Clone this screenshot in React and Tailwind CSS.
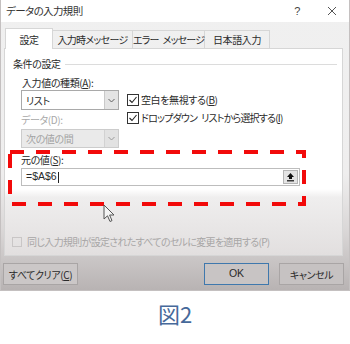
import React from "react";

function Chevron({ color = "#606060" }) {
  return (
    <svg width="7" height="5" viewBox="0 0 7 5">
      <path d="M0.5 1 L3.5 4 L6.5 1" fill="none" stroke={color} strokeWidth="1" />
    </svg>
  );
}

function Check({ checked, disabled }) {
  return (
    <div
      className={
        "shrink-0 border flex items-center justify-center " +
        (disabled ? "w-[10px] h-[10px] border-[#c9c6c6] bg-transparent" : "w-[12px] h-[12px] border-[#333] bg-white")
      }
    >
      {checked && (
        <svg width="10" height="10" viewBox="0 0 10 10">
          <path d="M1.5 5 L4 7.5 L8.5 2" fill="none" stroke="#222" strokeWidth="1.1" />
        </svg>
      )}
    </div>
  );
}

export default function App() {
  return (
    <div className="relative w-[350px] h-[344px] overflow-hidden bg-white font-['Noto_Sans_CJK_JP',sans-serif] text-[10px] tracking-[-0.4px] text-[#2a2a2a] [font-feature-settings:'palt'] whitespace-nowrap">
      <div className="h-[291px] flex flex-col border-x border-b border-[#c4c0c0] bg-[linear-gradient(to_bottom,#f0f0f0_0%,#efeeee_60%,#d9d6d6_80%,#b8b3b3_100%)]">
        {/* title bar */}
        <div className="h-[22px] bg-white flex items-center pl-[5px] pr-[12px] shrink-0">
          <span className="text-[10.5px] leading-none text-[#333] tracking-[-0.6px]">データの入力規則</span>
          <span className="ml-auto text-[11px] text-[#444] font-['Liberation_Sans',sans-serif]">?</span>
          <svg className="ml-[27px]" width="10" height="10" viewBox="0 0 10 10">
            <path d="M1 1 L9 9 M9 1 L1 9" stroke="#555" strokeWidth="1" />
          </svg>
        </div>

        {/* tabs */}
        <div className="mt-[6px] ml-[4px] flex items-end h-[20px] shrink-0">
          <div className="relative z-10 -mb-px w-[48px] h-[21px] bg-white border border-b-0 border-[#d6d6d6] flex items-center justify-center">
            設定
          </div>
          <div className="w-[80px] h-[18px] border-t border-r border-[#d6d6d6] flex items-center justify-center tracking-[-0.7px]">
            入力時メッセージ
          </div>
          <div className="w-[72px] h-[18px] border-t border-r border-[#d6d6d6] flex items-center justify-center tracking-[-0.8px]">
            <span>エラー</span>
            <span className="ml-[4px]">メッセージ</span>
          </div>
          <div className="w-[65px] h-[18px] border-t border-r border-[#d6d6d6] flex items-center justify-center">
            日本語入力
          </div>
        </div>

        {/* panel */}
        <div className="ml-[3px] w-[339px] h-[208px] shrink-0 border border-[#d6d6d6] bg-[linear-gradient(to_bottom,#ffffff_0%,#ffffff_68%,#efeeee_72%,#e2dfdf_100%)] flex flex-col">
          <div className="mt-[9px] flex items-center h-[12px] pl-[8px] pr-[5px]">
            <span className="leading-none">条件の設定</span>
            <div className="flex-1 h-px bg-[#dcdcdc] ml-[4px]" />
          </div>

          <div className="mt-[7px] pl-[17px] h-[12px] leading-[12px]">
            入力値の種類(<span className="underline">A</span>):
          </div>

          <div className="mt-[1px] pl-[16px] flex">
            <div className="flex flex-col">
              <div className="w-[98px] h-[20px] border border-[#a9a9a9] bg-white flex">
                <div className="flex-1 flex items-center pl-[4px]">リスト</div>
                <div className="w-[14px] bg-[#e4e4e4] border-l border-[#c9c9c9] flex items-center justify-center">
                  <Chevron />
                </div>
              </div>
              <div className="mt-[4px] h-[12px] leading-[12px] text-[#a8a8a8]">データ(D):</div>
              <div className="mt-[3px] w-[98px] h-[19px] border border-[#cccccc] bg-[#eaeaea] flex text-[#a3a3a3]">
                <div className="flex-1 flex items-center pl-[4px]">次の値の間</div>
                <div className="w-[14px] bg-[#e2e2e2] border-l border-[#d2d2d2] flex items-center justify-center">
                  <Chevron color="#9a9a9a" />
                </div>
              </div>
            </div>
            <div className="ml-[8px] flex flex-col">
              <div className="mt-[3px] flex items-center gap-[2px] h-[13px]">
                <Check checked />
                <span>空白を無視する(<span className="underline">B</span>)</span>
              </div>
              <div className="mt-[5px] flex items-center gap-[2px] h-[13px] tracking-[-0.8px]">
                <Check checked />
                <span>ドロップダウン</span>
                <span className="ml-[2px]">リストから選択する(<span className="underline">I</span>)</span>
              </div>
            </div>
          </div>

          <div className="mt-[6px] pl-[16px] h-[12px] leading-[12px]">
            元の値(<span className="underline">S</span>):
          </div>
          <div className="mt-[2px] ml-[16px] w-[279px] h-[18px] border border-[#bdbdbd] bg-white flex items-center">
            <span className="pl-[4px] font-['Liberation_Sans',sans-serif] text-[10.5px] tracking-normal">=$A$6</span>
            <span className="w-px h-[11px] bg-[#222] ml-[1px]" />
            <div className="ml-auto mr-[1px] w-[15px] h-[14px] bg-[#e4e4e4] border border-[#b5b5b5] flex items-center justify-center">
              <svg width="9" height="10" viewBox="0 0 9 10">
                <path d="M4.5 1 L8 5 L6 5 L6 7 L3 7 L3 5 L1 5 Z" fill="#111" />
                <rect x="1" y="8.2" width="7" height="1.2" fill="#111" />
              </svg>
            </div>
          </div>

          <div className="mt-[48px] ml-[7px] flex items-center gap-[5px] text-[#a8a6a6] tracking-[-0.7px]">
            <Check disabled />
            <span>同じ入力規則が設定されたすべてのセルに変更を適用する(P)</span>
          </div>
        </div>

        {/* buttons */}
        <div className="mt-[7px] flex pl-[2px] pr-[5px] shrink-0">
          <div className="w-[75px] h-[22px] border border-[#a9a5a5] bg-[#cbc7c7] flex items-center justify-center">
            すべてクリア(<span className="underline">C</span>)
          </div>
          <div className="ml-auto w-[65px] h-[22px] border-[1.5px] border-[#3f78ad] bg-[#c8c4c4] flex items-center justify-center font-['Liberation_Sans',sans-serif] text-[10.5px] tracking-normal">
            OK
          </div>
          <div className="ml-[10px] w-[65px] h-[22px] border border-[#a9a5a5] bg-[#c6c2c2] flex items-center justify-center">
            キャンセル
          </div>
        </div>
      </div>

      <div className="mt-[11px] flex justify-center text-[22px] leading-[22px] tracking-normal text-[#46699a]">
        図2
      </div>

      {/* red dashed annotation */}
      <svg className="absolute left-0 top-0 pointer-events-none" width="350" height="344">
        <rect x="10" y="152" width="294" height="52" fill="none" stroke="#f20a0a" strokeWidth="4" strokeDasharray="14 12" />
      </svg>

      {/* mouse cursor */}
      <svg className="absolute left-[103px] top-[204px]" width="14" height="20" viewBox="0 0 14 20">
        <path d="M1 1 L1 15 L4.5 11.8 L7 17.5 L9 16.6 L6.6 11 L11 11 Z" fill="#f4f4f4" stroke="#555" strokeWidth="1" strokeLinejoin="round" />
      </svg>
    </div>
  );
}
